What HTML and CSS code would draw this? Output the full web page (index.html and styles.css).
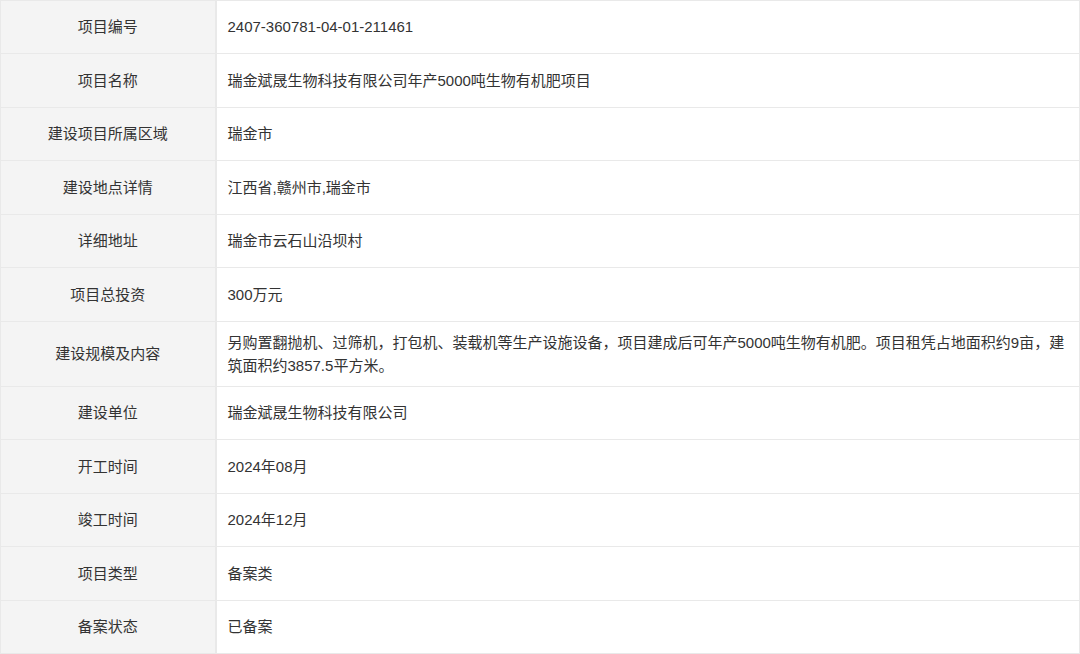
FILE: index.html
```html
<!DOCTYPE html>
<html lang="zh-CN">
<head>
  <meta charset="UTF-8">
  <meta name="viewport" content="width=device-width, initial-scale=1.0">
  <title>项目信息</title>
  <link rel="stylesheet" href="styles.css">
</head>
<body>
  <table class="info-table">
    <tr class="short"><th>项目编号</th><td>2407-360781-04-01-211461</td></tr>
    <tr><th>项目名称</th><td>瑞金斌晟生物科技有限公司年产5000吨生物有机肥项目</td></tr>
    <tr class="short"><th>建设项目所属区域</th><td>瑞金市</td></tr>
    <tr><th>建设地点详情</th><td>江西省,赣州市,瑞金市</td></tr>
    <tr class="short"><th>详细地址</th><td>瑞金市云石山沿坝村</td></tr>
    <tr><th>项目总投资</th><td>300万元</td></tr>
    <tr class="tall"><th>建设规模及内容</th><td>另购置翻抛机、过筛机，打包机、装载机等生产设施设备，项目建成后可年产5000吨生物有机肥。项目租凭占地面积约9亩，建筑面积约3857.5平方米。</td></tr>
    <tr class="short"><th>建设单位</th><td>瑞金斌晟生物科技有限公司</td></tr>
    <tr><th>开工时间</th><td>2024年08月</td></tr>
    <tr class="short"><th>竣工时间</th><td>2024年12月</td></tr>
    <tr><th>项目类型</th><td>备案类</td></tr>
    <tr class="short"><th>备案状态</th><td>已备案</td></tr>
  </table>
</body>
</html>
```

FILE: styles.css
```css
body {
  margin: 0;
  padding: 0;
  background: #fff;
  font-family: "Liberation Sans", "Noto Sans CJK SC", sans-serif;
  font-size: 15px;
  color: #333;
}
.info-table {
  width: 1080px;
  border-collapse: collapse;
  table-layout: fixed;
}
.info-table tr {
  height: 54px;
}
.info-table tr.short {
  height: 53px;
}
.info-table tr.tall {
  height: 65px;
}
.info-table th,
.info-table td {
  border: 1px solid #e9e9e9;
  padding: 8px 11px 9px;
  line-height: 23px;
}
.info-table th {
  width: 215px;
  box-sizing: border-box;
  background: #f4f4f4;
  font-weight: normal;
  text-align: center;
  border-right-width: 2px;
}
.info-table td {
  text-align: left;
}
```
